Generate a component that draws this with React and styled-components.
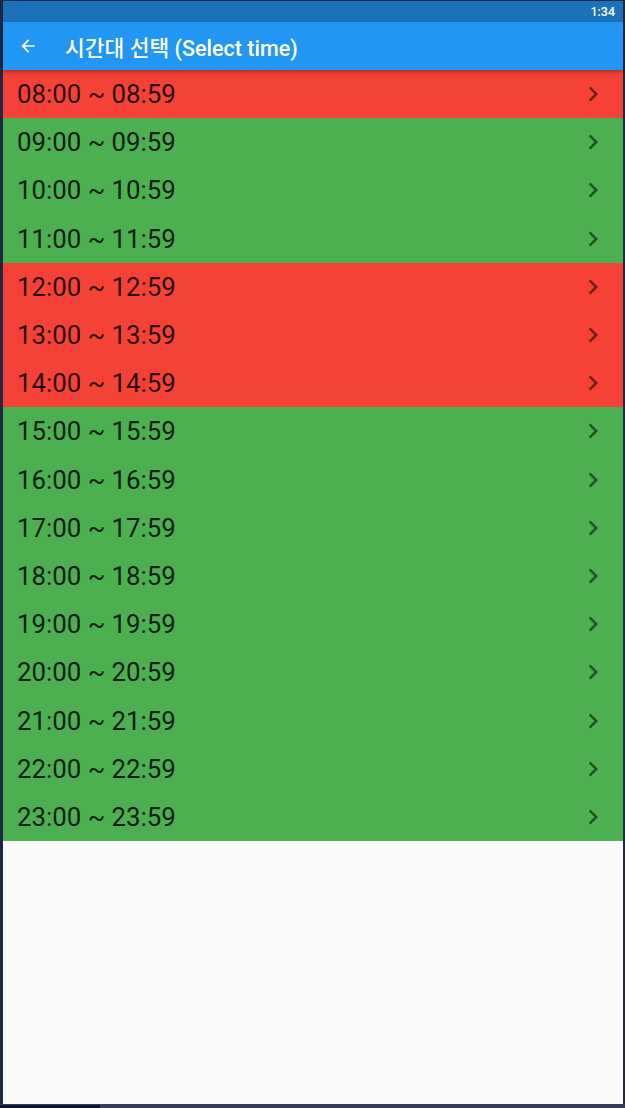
import React from "react";
import styled, { createGlobalStyle } from "styled-components";

const Global = createGlobalStyle`
  html, body { margin: 0; padding: 0; }
  body { background: #2a2d4c; font-family: Roboto, "Noto Sans CJK KR", sans-serif; }
`;

const Frame = styled.div`
  box-sizing: border-box;
  width: 625px;
  height: 1108px;
  padding: 1px 2px 0 3px;
  background: #1f2745;
  display: flex;
  flex-direction: column;
`;

const Screen = styled.div`
  flex: 1;
  display: flex;
  flex-direction: column;
  background: #fafafa;
  min-height: 0;
`;

const BottomEdge = styled.div`
  height: 4px;
  display: flex;
  background: #383a5a;
  margin: 0 -2px 0 -3px;
`;

const BottomDark = styled.div`
  width: 100px;
  margin-top: 1px;
  background: #0b1330;
`;

const StatusBar = styled.div`
  height: 21px;
  background: #1b72b9;
  display: flex;
  align-items: center;
  justify-content: flex-end;
  padding-right: 8px;
  color: #fff;
  font-size: 12.5px;
  font-weight: 500;
`;

const AppBar = styled.header`
  height: 48px;
  background: #2196f3;
  display: flex;
  align-items: center;
  padding-left: 15px;
  color: #fff;
  position: relative;
  z-index: 2;
  box-shadow: 0 2px 4px rgba(0, 0, 0, 0.3);
`;

const Title = styled.h1`
  margin: 0 0 0 27px;
  font-size: 21.5px;
  font-weight: 500;
  letter-spacing: 0;
`;

const List = styled.div`
  height: 771px;
  display: flex;
  flex-direction: column;
`;

const Row = styled.div`
  flex: 1;
  display: flex;
  align-items: center;
  justify-content: space-between;
  padding: 0 15px 0 14px;
  background: ${(p) => (p.$busy ? "#f44336" : "#4caf50")};
  color: rgba(0, 0, 0, 0.87);
  font-size: 25.8px;
`;

const Chevron = styled.svg`
  width: 30px;
  height: 30px;
  fill: rgba(0, 0, 0, 0.54);
`;

const busy = new Set([8, 12, 13, 14]);
const hours = Array.from({ length: 16 }, (_, i) => i + 8);
const pad = (n) => String(n).padStart(2, "0");

export default function App() {
  return (
    <>
      <Global />
      <Frame>
        <Screen>
          <StatusBar>1:34</StatusBar>
          <AppBar>
            <svg width="20" height="20" viewBox="0 0 24 24" fill="#fff">
              <path d="M20 11H7.83l5.59-5.59L12 4l-8 8 8 8 1.41-1.41L7.83 13H20v-2z" />
            </svg>
            <Title>시간대 선택 (Select time)</Title>
          </AppBar>
          <List>
            {hours.map((h) => (
              <Row key={h} $busy={busy.has(h)}>
                <span>
                  {pad(h)}:00 ~ {pad(h)}:59
                </span>
                <Chevron viewBox="0 0 24 24">
                  <path d="M10 6L8.59 7.41 13.17 12l-4.58 4.59L10 18l6-6z" />
                </Chevron>
              </Row>
            ))}
          </List>
        </Screen>
        <BottomEdge>
          <BottomDark />
        </BottomEdge>
      </Frame>
    </>
  );
}
